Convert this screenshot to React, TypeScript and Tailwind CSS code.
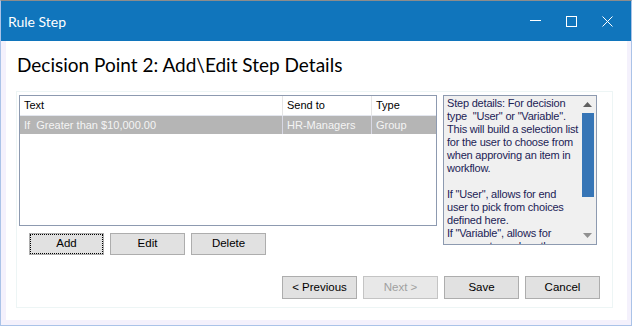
import React from "react";

const lines = [
  "Step details: For decision",
  "type  \"User\" or \"Variable\".",
  "This will build a selection list",
  "for the user to choose from",
  "when approving an item in",
  "workflow.",
  "",
  "If \"User\", allows for end",
  "user to pick from choices",
  "defined here.",
  "If \"Variable\", allows for",
  "program to analyze the",
];

function Btn({ children, focus, disabled, h = "h-[22px]" }: { children: React.ReactNode; focus?: boolean; disabled?: boolean; h?: string }) {
  return (
    <div
      className={`relative w-[75px] ${h} flex items-center justify-center border text-[11.5px] ${
        disabled ? "border-[#c4c4c4] text-[#a0a0a0] bg-[#e8e8e8]" : "border-[#adadad] text-black bg-[#e1e1e1]"
      }`}
    >
      {focus && <div className="absolute inset-0 border border-dotted border-black" />}
      <span>{children}</span>
    </div>
  );
}

export default function App() {
  return (
    <div
      className="w-[632px] h-[326px] flex flex-col bg-[#f4f1fc] border-t border-t-[#8c8c8c] border-x border-b border-x-[#aac3e8] border-b-[#aac3e8] overflow-hidden"
      style={{ fontFamily: '"Liberation Sans", Arial, sans-serif' }}
    >
      {/* Title bar */}
      <div className="h-[40px] shrink-0 bg-[#1075bc] flex items-center text-white">
        <div className="flex-1 pl-[7px] text-[14px]" style={{ fontFamily: 'Lato, sans-serif' }}>
          Rule Step
        </div>
        <div className="flex items-center pr-[6px]">
          <div className="w-[36px] h-[40px] flex items-center justify-center">
            <svg width="11" height="11" viewBox="0 0 11 11">
              <line x1="0" y1="4.5" x2="11" y2="4.5" stroke="white" strokeWidth="1" />
            </svg>
          </div>
          <div className="w-[36px] h-[40px] flex items-center justify-center">
            <svg width="11" height="11" viewBox="0 0 11 11">
              <rect x="0.5" y="0.5" width="10" height="10" fill="none" stroke="white" strokeWidth="1" />
            </svg>
          </div>
          <div className="w-[36px] h-[40px] flex items-center justify-center">
            <svg width="11" height="11" viewBox="0 0 11 11">
              <line x1="0.5" y1="0.5" x2="10.5" y2="10.5" stroke="white" strokeWidth="1" />
              <line x1="10.5" y1="0.5" x2="0.5" y2="10.5" stroke="white" strokeWidth="1" />
            </svg>
          </div>
        </div>
      </div>

      {/* Content */}
      <div className="flex-1 ml-[5px] mr-[4px] mb-[5px] bg-white flex flex-col">
        <div
          className="pl-[11px] pt-[9px] h-[50px] text-[19px] leading-[30px] text-black"
          style={{ fontFamily: 'Lato, sans-serif' }}
        >
          Decision Point 2: Add\Edit Step Details
        </div>

        <div className="ml-[10px] w-[597px] h-[217px] border border-[#edf5f5] flex flex-col">
          <div className="flex pl-[2px] pt-[3px] gap-[6px]">
            {/* Left column */}
            <div className="flex flex-col">
              <div className="w-[418px] h-[131px] border border-[#8d9ab0] bg-white text-[11px]">
                <div className="flex h-[20px] border-b border-[#e3e6ee] items-center text-black">
                  <div className="w-[263px] h-full pl-[4px] flex items-center border-r border-[#e5e5e5]">Text</div>
                  <div className="w-[89px] h-full pl-[4px] flex items-center border-r border-[#e5e5e5]">Send to</div>
                  <div className="flex-1 h-full pl-[4px] flex items-center">Type</div>
                </div>
                <div className="flex h-[18px] bg-[#b5b5b5] items-center text-[#f4f4f4]">
                  <div className="w-[263px] h-full pl-[4px] flex items-center border-r border-[#d8d8e4] whitespace-pre">If  Greater than $10,000.00</div>
                  <div className="w-[89px] h-full pl-[4px] flex items-center border-r border-[#d8d8e4]">HR-Managers</div>
                  <div className="flex-1 h-full pl-[4px] flex items-center">Group</div>
                </div>
              </div>
              <div className="flex gap-[6px] pl-[10px] mt-[7px]">
                <Btn focus>Add</Btn>
                <Btn>Edit</Btn>
                <Btn>Delete</Btn>
              </div>
            </div>

            {/* Details text box */}
            <div className="w-[154px] h-[150px] border border-[#8d9ab0] bg-[#f0f0f0] flex overflow-hidden">
              <div className="flex-1 pl-[3px] pt-[1px] text-[11px] tracking-[-0.2px] leading-[13px] text-[#1c2356] overflow-hidden">
                {lines.map((l, i) => (
                  <div key={i} className="h-[13px] whitespace-pre">
                    {l}
                  </div>
                ))}
              </div>
              <div className="w-[17px] h-full flex flex-col items-center">
                <div className="h-[17px] flex items-center justify-center">
                  <svg width="9" height="5" viewBox="0 0 9 5">
                    <polygon points="0,5 4.5,0 9,5" fill="#606060" />
                  </svg>
                </div>
                <div className="w-[12px] h-[84px] bg-[#3675b6]" />
                <div className="flex-1" />
                <div className="h-[17px] flex items-center justify-center">
                  <svg width="9" height="5" viewBox="0 0 9 5">
                    <polygon points="0,0 9,0 4.5,5" fill="#909090" />
                  </svg>
                </div>
              </div>
            </div>
          </div>

          <div className="mt-auto mb-[8px] pr-[12px] flex justify-end gap-[6px]">
            <Btn h="h-[23px]">&lt; Previous</Btn>
            <Btn h="h-[23px]" disabled>
              Next &gt;
            </Btn>
            <Btn h="h-[23px]">Save</Btn>
            <Btn h="h-[23px]">Cancel</Btn>
          </div>
        </div>
      </div>
    </div>
  );
}
